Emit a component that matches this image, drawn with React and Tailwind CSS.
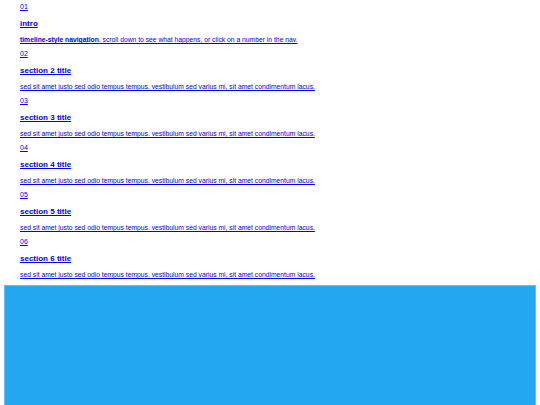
const sections = [
  { n: "01", title: "intro", intro: true },
  { n: "02", title: "section 2 title" },
  { n: "03", title: "section 3 title" },
  { n: "04", title: "section 4 title" },
  { n: "05", title: "section 5 title" },
  { n: "06", title: "section 6 title" },
];

const body =
  "sed sit amet justo sed odio tempus tempus. vestibulum sed varius mi, sit amet condimentum lacus.";

export default function App() {
  return (
    <div className="min-h-[405px] bg-white pt-[1px] font-['Liberation_Sans',Arial,sans-serif] text-[#0000ee]">
      <div className="flex flex-col pl-[20px]">
        {sections.map((s, i) => (
          <section key={s.n} className={i === 0 ? "" : "mt-[2px]"}>
            <a href={`#${s.n}`} className="block h-[12px] text-[7px] leading-[12px] underline">
              {s.n}
            </a>
            <h2 className="mt-[5px] h-[12px] text-[8px] font-bold leading-[12px] underline">
              {s.title}
            </h2>
            <p className="mt-[4px] h-[12px] text-[6.75px] leading-[12px] underline">
              {s.intro ? (
                <>
                  <strong>timeline-style navigation</strong>. scroll down to see what happens, or click on a number in the nav.
                </>
              ) : (
                body
              )}
            </p>
          </section>
        ))}
      </div>
      <div className="mx-[4px] mt-[4px] h-[140px] border border-[#5ec0f5] bg-[#22a7f0]" />
    </div>
  );
}
